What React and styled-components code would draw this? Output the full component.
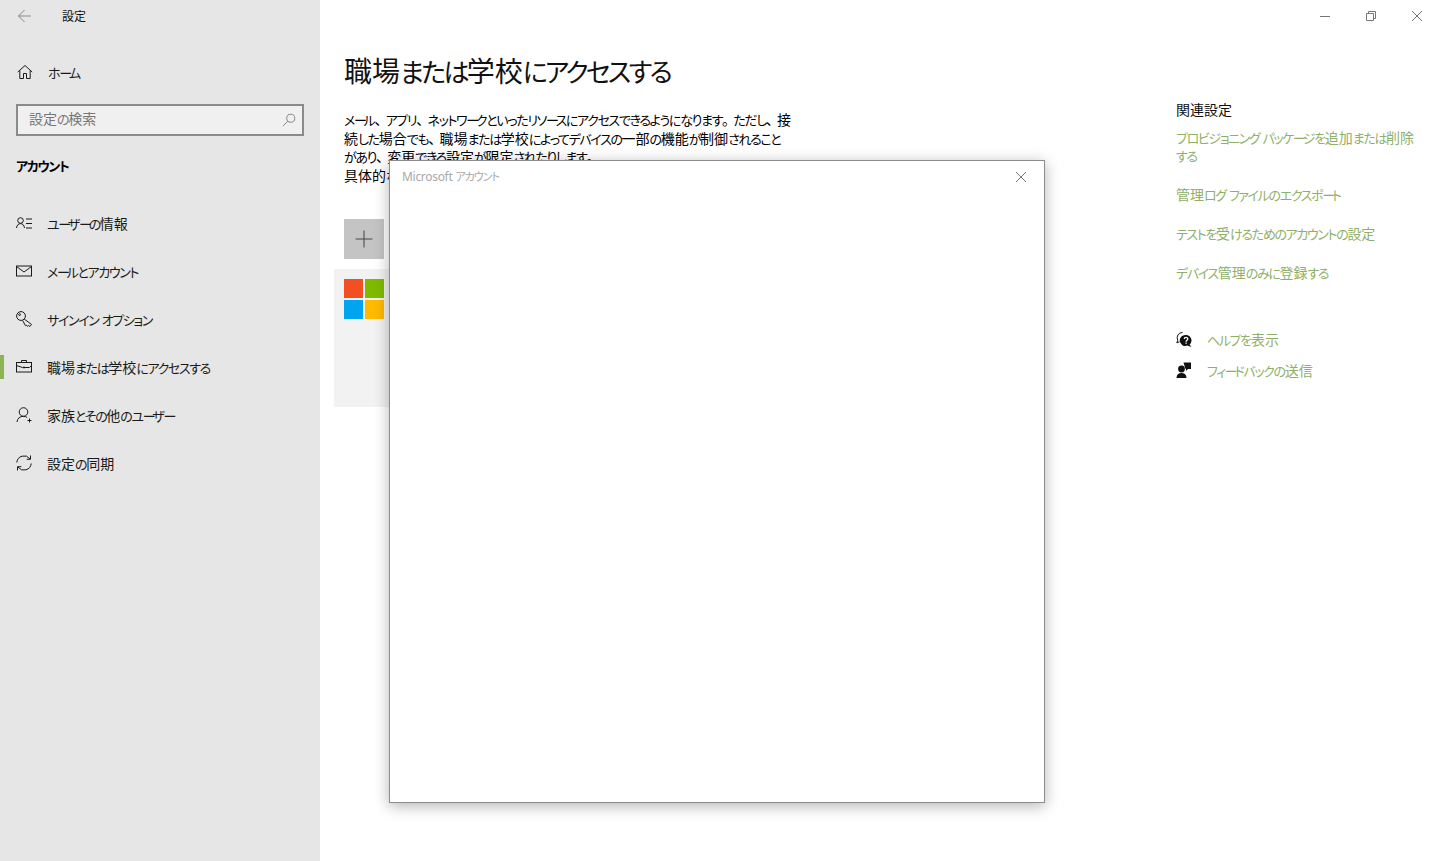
import React from "react";
import styled, { createGlobalStyle } from "styled-components";

const GlobalStyle = createGlobalStyle`
  html, body {
    margin: 0;
    padding: 0;
    height: 100%;
    background: #fff;
    overflow: hidden;
  }
  body {
    font-family: "Noto Sans CJK JP", "Noto Sans", sans-serif;
    font-feature-settings: "palt";
    font-size: 14px;
    color: #000;
  }
`;

const Page = styled.div`
  position: relative;
  display: flex;
  width: 1440px;
  height: 861px;
  overflow: hidden;
`;

const Sidebar = styled.aside`
  display: flex;
  flex-direction: column;
  flex: 0 0 320px;
  background: #e6e6e6;
`;

const TitleBar = styled.div`
  display: flex;
  align-items: center;
  height: 32px;
  padding-left: 17px;
  color: #111;
`;

const AppTitle = styled.span`
  margin: 0 0 2px 29px;
  font-size: 12px;
`;

const HomeRow = styled.div`
  display: flex;
  align-items: center;
  height: 48px;
  margin-top: 16px;
  padding-left: 17px;
  gap: 15px;
  color: #1a1a1a;
`;

const SearchBox = styled.div`
  display: flex;
  align-items: center;
  justify-content: space-between;
  box-sizing: border-box;
  width: 288px;
  height: 32px;
  margin: 8px 0 0 16px;
  padding: 0 6px 0 11px;
  border: 2px solid #8a8a8a;
  background: #f0f0f0;
  color: #777;
`;

const SearchText = styled.span`
  margin-bottom: 4px;
`;

const SectionTitle = styled.div`
  margin: 17px 0 0 16px;
  height: 24px;
  line-height: 24px;
  font-weight: 700;
`;

const NavList = styled.nav`
  display: flex;
  flex-direction: column;
  margin-top: 22px;
`;

const NavItem = styled.div`
  position: relative;
  display: flex;
  align-items: center;
  height: 48px;
  padding-left: 16px;
  gap: 15px;
  color: #1a1a1a;

  &::before {
    content: "";
    display: ${(p) => (p.$active ? "block" : "none")};
    position: absolute;
    left: 0;
    top: 12px;
    width: 4px;
    height: 24px;
    background: #8cb356;
  }
`;

const NavLabel = styled.span`
  white-space: nowrap;
`;

const Main = styled.main`
  flex: 1;
  display: flex;
  justify-content: space-between;
  padding: 0 24px 0 14px;
  min-width: 0;
`;

const Content = styled.section`
  display: flex;
  flex-direction: column;
  width: 800px;
`;

const PageTitle = styled.h1`
  margin: 50px 0 0 10px;
  height: 40px;
  line-height: 40px;
  font-size: 28px;
  font-weight: 400;
  white-space: nowrap;
  color: #111;
`;

const Description = styled.div`
  margin: 20px 0 0 10px;
  width: 470px;
  line-height: 18.6px;
  color: #000;
`;

const DescLine = styled.div`
  height: 18.6px;
  white-space: nowrap;
`;

const AddTile = styled.div`
  display: flex;
  align-items: center;
  justify-content: center;
  width: 40px;
  height: 40px;
  margin: 35px 0 0 10px;
  background: #c4c4c4;
`;

const AccountCard = styled.div`
  width: 640px;
  height: 138px;
  margin-top: 10px;
  padding: 10px;
  box-sizing: border-box;
  background: #f2f2f2;
`;

const MsLogo = styled.div`
  display: grid;
  grid-template-columns: 19px 19px;
  grid-auto-rows: 19px;
  gap: 2px;
  width: 40px;
`;

const MsSquare = styled.span`
  background: ${(p) => p.$color};
`;

const Related = styled.aside`
  display: flex;
  flex-direction: column;
  align-items: flex-start;
  width: 240px;
`;

const WindowControls = styled.div`
  display: flex;
  align-self: flex-end;
  align-items: center;
  gap: 36px;
  height: 32px;
  color: #777;
  margin-right: -6px;
`;

const RelatedTitle = styled.div`
  margin-top: 67px;
  height: 20px;
  line-height: 20px;
  color: #111;
`;

const LinkList = styled.div`
  display: flex;
  flex-direction: column;
  gap: 21px;
  margin-top: 9px;
`;

const GreenLink = styled.a`
  display: block;
  line-height: 18px;
  white-space: nowrap;
  color: #8fb069;
`;

const LinkLine = styled.div`
  height: 18px;
`;

const HelpList = styled.div`
  display: flex;
  flex-direction: column;
  gap: 11px;
  margin-top: 48px;
`;

const HelpRow = styled.div`
  display: flex;
  align-items: center;
  gap: 15px;
  height: 20px;
`;

const Dialog = styled.div`
  position: absolute;
  left: 389px;
  top: 160px;
  box-sizing: border-box;
  width: 656px;
  height: 643px;
  background: #fff;
  border: 1px solid #8c8c8c;
  box-shadow: 0 3px 14px rgba(0, 0, 0, 0.3);
`;

const DialogHeader = styled.div`
  display: flex;
  align-items: center;
  justify-content: space-between;
  height: 30px;
  padding: 0 18px 0 12px;
  color: #a8a8a8;
  font-size: 12px;
`;

const DialogTitle = styled.span`
  font-family: "Noto Sans", "Noto Sans CJK JP", sans-serif;
  letter-spacing: -0.3px;
`;

const DialogClose = styled.span`
  display: flex;
  margin-top: 2px;
  color: #777;
`;

// Yu Gothic UI sets kana narrow, the long vowel mark short, kanji at full width
const KanaRun = styled.span`
  font-size: 0.93em;
  letter-spacing: -0.105em;
`;

const LongMark = styled.span`
  font-size: 0.93em;
  letter-spacing: -0.25em;
`;

const KanjiRun = styled.span`
  letter-spacing: 0;
`;

const PunctRun = styled.span`
  letter-spacing: -0.2em;
  font-feature-settings: normal;
`;

const runPattern = /([\u3001\u3002]+|[\u4e00-\u9fff]+|\u30fc+|[\u3041-\u30fb]+)/;

const Jp = ({ text }) =>
  text
    .split(runPattern)
    .filter(Boolean)
    .map((run, i) => {
      if (/^[\u3001\u3002]/.test(run)) return <PunctRun key={i}>{run}</PunctRun>;
      if (/^[\u4e00-\u9fff]/.test(run)) return <KanjiRun key={i}>{run}</KanjiRun>;
      if (/^\u30fc/.test(run)) return <LongMark key={i}>{run}</LongMark>;
      if (/^[\u3041-\u30fb]/.test(run)) return <KanaRun key={i}>{run}</KanaRun>;
      return run;
    });

const Icon = ({ size = 16, stroke = "currentColor", width = 1, children }) => (
  <svg
    width={size}
    height={size}
    viewBox="0 0 16 16"
    fill="none"
    stroke={stroke}
    strokeWidth={width}
    style={{ flex: "none" }}
  >
    {children}
  </svg>
);

const CloseIcon = () => (
  <svg width="10" height="10" viewBox="0 0 10 10" fill="none" stroke="currentColor">
    <path d="M0 0l10 10M10 0L0 10" />
  </svg>
);

const MinimizeIcon = () => (
  <svg width="10" height="10" viewBox="0 0 10 10" fill="none" stroke="currentColor">
    <path d="M0 5.5h10" />
  </svg>
);

const RestoreIcon = () => (
  <svg width="10" height="10" viewBox="0 0 10 10" fill="none" stroke="currentColor">
    <path d="M0.5 2.5h7v7h-7zM2.5 2.5v-2h7v7h-2" />
  </svg>
);

const navItems = [
  {
    label: "ユーザーの情報",
    icon: (
      <Icon>
        <circle cx="4.5" cy="5.5" r="2.8" />
        <path d="M0.5 13c.3-2.8 2-4.4 4-4.4s3.7 1.6 4 4.4M10 4h6M10 8.5h6M10 13h6" />
      </Icon>
    ),
  },
  {
    label: "メールとアカウント",
    icon: (
      <Icon>
        <rect x="0.5" y="3" width="15" height="10" />
        <path d="M0.5 3.5l7.5 5.5 7.5-5.5" />
      </Icon>
    ),
  },
  {
    label: "サインイン オプション",
    icon: (
      <Icon>
        <circle cx="5" cy="5" r="4.4" />
        <circle cx="3.6" cy="3.6" r="0.9" />
        <path d="M8.2 8l7.3 5.4-1.6 2.1-1.4-1-1 .9-1.1-1.3-1 .5L6.6 9.4" />
      </Icon>
    ),
  },
  {
    label: "職場または学校にアクセスする",
    active: true,
    icon: (
      <Icon>
        <rect x="0.5" y="3.5" width="15" height="9.5" />
        <path d="M5.5 3.5V1.5h5v2M0.5 6.5l6 2h7l2-2M8 7.5v2" />
      </Icon>
    ),
  },
  {
    label: "家族とその他のユーザー",
    icon: (
      <Icon>
        <circle cx="7.5" cy="5" r="4.3" />
        <path d="M1 15c.3-3.6 2.8-5.7 6.5-5.7 1.5 0 2.7.4 3.6 1.2M13.5 11.5v4M11.5 13.5h4" />
      </Icon>
    ),
  },
  {
    label: "設定の同期",
    icon: (
      <Icon>
        <path d="M0.8 7.5A7.3 7.3 0 0 1 13.9 3.8M15.2 8.5A7.3 7.3 0 0 1 2.1 12.2" />
        <path d="M14.5 0.5v3.8h-3.8M1.5 15.5v-3.8h3.8" />
      </Icon>
    ),
  },
];

const links = [
  ["プロビジョニング パッケージを追加または削除", "する"],
  ["管理ログ ファイルのエクスポート"],
  ["テストを受けるためのアカウントの設定"],
  ["デバイス管理のみに登録する"],
];

const descLines = [
  "メール、アプリ、ネットワークといったリソースにアクセスできるようになります。ただし、接",
  "続した場合でも、職場または学校によってデバイスの一部の機能が制御されること",
  "があり、変更できる設定が限定されたりします。",
  "具体的な",
];

export default function App() {
  return (
    <Page>
      <GlobalStyle />
      <Sidebar>
        <TitleBar>
          <Icon stroke="#888">
            <path d="M14 8H1.5M7.5 2l-6 6 6 6" />
          </Icon>
          <AppTitle>設定</AppTitle>
        </TitleBar>
        <HomeRow>
          <Icon>
            <path d="M0.8 8L8 1.5 15.2 8M2.8 6.5V14.5h3.7V9.5h3V14.5h3.7V6.5" />
          </Icon>
          <NavLabel><Jp text="ホーム" /></NavLabel>
        </HomeRow>
        <SearchBox>
          <SearchText><Jp text="設定の検索" /></SearchText>
          <Icon size={14} stroke="#777">
            <circle cx="10" cy="6" r="4.6" />
            <path d="M6.6 9.4L1 15" />
          </Icon>
        </SearchBox>
        <SectionTitle><Jp text="アカウント" /></SectionTitle>
        <NavList>
          {navItems.map((item) => (
            <NavItem key={item.label} $active={item.active}>
              {item.icon}
              <NavLabel><Jp text={item.label} /></NavLabel>
            </NavItem>
          ))}
        </NavList>
      </Sidebar>
      <Main>
        <Content>
          <PageTitle><Jp text="職場または学校にアクセスする" /></PageTitle>
          <Description>
            {descLines.map((line) => (
              <DescLine key={line}><Jp text={line} /></DescLine>
            ))}
          </Description>
          <AddTile>
            <Icon size={18} stroke="#444" width={0.9}>
              <path d="M8 0.5v15M0.5 8h15" />
            </Icon>
          </AddTile>
          <AccountCard>
            <MsLogo>
              <MsSquare $color="#f25022" />
              <MsSquare $color="#7fba00" />
              <MsSquare $color="#00a4ef" />
              <MsSquare $color="#ffb900" />
            </MsLogo>
          </AccountCard>
        </Content>
        <Related>
          <WindowControls>
            <MinimizeIcon />
            <RestoreIcon />
            <CloseIcon />
          </WindowControls>
          <RelatedTitle>関連設定</RelatedTitle>
          <LinkList>
            {links.map((lines) => (
              <GreenLink key={lines[0]}>
                {lines.map((line) => (
                  <LinkLine key={line}><Jp text={line} /></LinkLine>
                ))}
              </GreenLink>
            ))}
          </LinkList>
          <HelpList>
            <HelpRow>
              <Icon stroke="none">
                <path stroke="#111" d="M6.5 1.5A5.2 5.2 0 0 0 1.8 9.2L0.8 11.8l2.8-1" />
                <path fill="#111" d="M10 4a5.5 5.5 0 0 1 3.6 9.6l1.9 2.4-4.3-1.4A5.5 5.5 0 1 1 10 4z" />
                <path stroke="#fff" strokeWidth="1.3" d="M8.3 8c0-2.2 3.5-2.2 3.5-.2 0 1.5-1.7 1.4-1.7 2.9M10.1 11.4v1.4" />
              </Icon>
              <GreenLink><Jp text="ヘルプを表示" /></GreenLink>
            </HelpRow>
            <HelpRow>
              <Icon stroke="none">
                <circle cx="5.5" cy="7" r="3.4" fill="#111" />
                <path fill="#111" d="M0.5 16c0-3.4 2-5 5-5s5 1.6 5 5z" />
                <path fill="#111" d="M7.5 0.5h7.5v6.5h-3l-2 2v-2H9.5z" />
              </Icon>
              <GreenLink><Jp text="フィードバックの送信" /></GreenLink>
            </HelpRow>
          </HelpList>
        </Related>
      </Main>
      <Dialog>
        <DialogHeader>
          <DialogTitle><Jp text="Microsoft アカウント" /></DialogTitle>
          <DialogClose>
            <CloseIcon />
          </DialogClose>
        </DialogHeader>
      </Dialog>
    </Page>
  );
}
